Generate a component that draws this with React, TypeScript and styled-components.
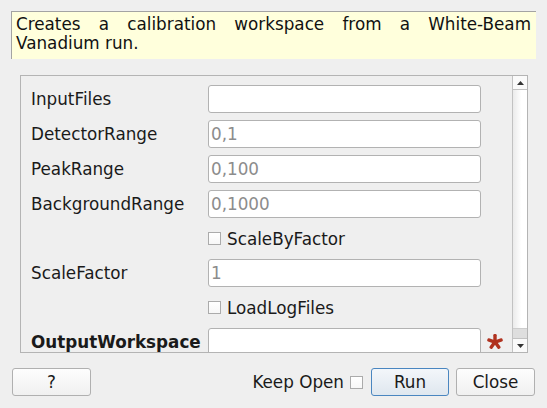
import React from "react";
import styled, { createGlobalStyle } from "styled-components";

const Global = createGlobalStyle`
  html, body { margin: 0; padding: 0; background: #efefef; }
  body { font-family: "DejaVu Sans", "Liberation Sans", sans-serif; }
  * { box-sizing: border-box; }
`;

const Page = styled.div`
  width: 547px;
  height: 408px;
  background: #efefef;
  display: flex;
  flex-direction: column;
  font-family: "DejaVu Sans", "Liberation Sans", sans-serif;
  font-size: 16.8px;
  color: #1c1c1c;
  overflow: hidden;
`;

const Description = styled.div`
  margin: 11px 11px 0 11px;
  height: 48px;
  background: #ffffdc;
  border-top: 1px solid #a3a3a3;
  border-left: 1px solid #a3a3a3;
  padding: 3px 5px 0 4px;
  line-height: 19px;
  text-align: justify;
  color: #111;
`;

const Frame = styled.div`
  margin: 16px 0 0 20px;
  width: 508px;
  height: 278px;
  border: 1px solid #b4b4b4;
  display: flex;
  overflow: hidden;
`;

const Form = styled.div`
  flex: 1;
  padding: 9px 0 0 10px;
  display: grid;
  grid-template-columns: 171px 273px 16px;
  grid-template-rows: 28px 28px 28px 28px 27px 28px 27px 28px;
  column-gap: 6px;
  row-gap: 7px;
  align-items: center;
`;

const Label = styled.div<{ $bold?: boolean }>`
  grid-column: 1;
  font-weight: ${(p) => (p.$bold ? "bold" : "normal")};
  white-space: nowrap;
  color: #1a1a1a;
`;

const Input = styled.div<{ $placeholder?: boolean }>`
  grid-column: 2;
  height: 28px;
  background: #ffffff;
  border: 1px solid #b2b2b2;
  border-radius: 3px;
  padding: 0 2px;
  display: flex;
  align-items: center;
  color: ${(p) => (p.$placeholder ? "#8c8c8c" : "#1a1a1a")};
`;

const CheckRow = styled.label`
  grid-column: 2;
  display: flex;
  align-items: center;
  gap: 6px;
  color: #1a1a1a;
`;

const Box = styled.span`
  width: 13px;
  height: 13px;
  border: 1px solid #ababab;
  background: linear-gradient(#ffffff, #f7f7f7);
  display: inline-block;
  flex: none;
`;

const Required = styled.span`
  grid-column: 3;
  display: flex;
  align-items: center;
  justify-content: center;
`;

const ScrollBar = styled.div`
  width: 15px;
  border-left: 1px solid #c2c2c2;
  display: flex;
  flex-direction: column;
  background: linear-gradient(to right, #ebebeb, #ffffff 60%);
`;

const Arrow = styled.div<{ $down?: boolean }>`
  height: 14px;
  flex: none;
  display: flex;
  align-items: center;
  justify-content: center;
  background: #fafafa;
  ${(p) => (p.$down ? "border-top: 1px solid #c2c2c2;" : "border-bottom: 1px solid #c2c2c2;")}
`;

const Track = styled.div`
  flex: 1;
  display: flex;
  flex-direction: column;
  justify-content: flex-end;
`;

const Handle = styled.div`
  height: 10px;
  background: #dedede;
  border-top: 1px solid #cdcdcd;
`;

const Footer = styled.div`
  display: flex;
  align-items: center;
  padding: 15px 12px 0 12px;
`;

const Button = styled.button<{ $primary?: boolean }>`
  height: 28px;
  width: ${(p) => (p.$primary ? "78px" : "79px")};
  font-family: "DejaVu Sans", "Liberation Sans", sans-serif;
  font-size: 16.8px;
  color: #1a1a1a;
  border-radius: 3px;
  padding: 0;
  border: 1px solid ${(p) => (p.$primary ? "#4a86c0" : "#b0b0b0")};
  background: ${(p) =>
    p.$primary
      ? "linear-gradient(#f3f6fa, #dfe7ef)"
      : "linear-gradient(#fdfdfd, #f0f0f0)"};
`;

const Spacer = styled.div`
  flex: 1;
`;

const Right = styled.div`
  display: flex;
  align-items: center;
`;

const KeepOpen = styled.span`
  margin-right: 6px;
  color: #1a1a1a;
`;

const KeepBox = styled(Box)`
  margin-right: 8px;
`;

const CloseButton = styled(Button)`
  margin-left: 7px;
`;

const Tri = ({ down }: { down?: boolean }) => (
  <svg width="7" height="4" viewBox="0 0 7 4">
    <path d={down ? "M0 0 L7 0 L3.5 4 Z" : "M0 4 L7 4 L3.5 0 Z"} fill="#333" />
  </svg>
);

const Star = () => (
  <svg width="16" height="16" viewBox="-8 -8 16 16">
    {[0, 72, 144, 216, 288].map((a) => (
      <rect key={a} x="-1.7" y="-8" width="3.4" height="8.5" rx="1.2" fill="#b0321f" transform={`rotate(${a})`} />
    ))}
  </svg>
);

type Field =
  | { kind: "input"; label: string; value?: string; placeholder?: boolean; bold?: boolean; required?: boolean }
  | { kind: "check"; label: string };

const fields: Field[] = [
  { kind: "input", label: "InputFiles" },
  { kind: "input", label: "DetectorRange", value: "0,1", placeholder: true },
  { kind: "input", label: "PeakRange", value: "0,100", placeholder: true },
  { kind: "input", label: "BackgroundRange", value: "0,1000", placeholder: true },
  { kind: "check", label: "ScaleByFactor" },
  { kind: "input", label: "ScaleFactor", value: "1", placeholder: true },
  { kind: "check", label: "LoadLogFiles" },
  { kind: "input", label: "OutputWorkspace", bold: true, required: true },
];

export default function App() {
  return (
    <Page>
      <Global />
      <Description>
        Creates a calibration workspace from a White-Beam Vanadium run.
      </Description>
      <Frame>
        <Form>
          {fields.map((f) =>
            f.kind === "input" ? (
              <React.Fragment key={f.label}>
                <Label $bold={f.bold}>{f.label}</Label>
                <Input $placeholder={f.placeholder}>{f.value ?? ""}</Input>
                {f.required ? (
                  <Required>
                    <Star />
                  </Required>
                ) : null}
              </React.Fragment>
            ) : (
              <CheckRow key={f.label}>
                <Box />
                {f.label}
              </CheckRow>
            )
          )}
        </Form>
        <ScrollBar>
          <Arrow>
            <Tri />
          </Arrow>
          <Track>
            <Handle />
          </Track>
          <Arrow $down>
            <Tri down />
          </Arrow>
        </ScrollBar>
      </Frame>
      <Footer>
        <Button>?</Button>
        <Spacer />
        <Right>
          <KeepOpen>Keep Open</KeepOpen>
          <KeepBox />
          <Button $primary>Run</Button>
          <CloseButton>Close</CloseButton>
        </Right>
      </Footer>
    </Page>
  );
}
